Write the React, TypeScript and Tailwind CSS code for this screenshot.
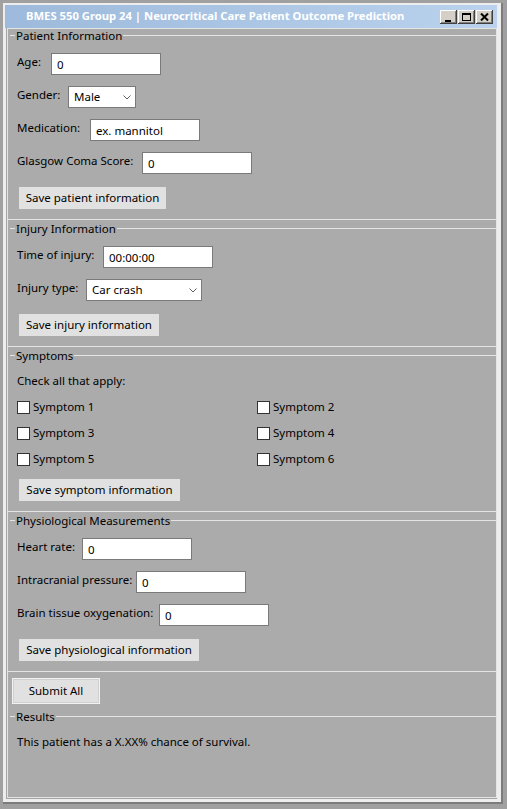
const Legend = ({ title }: { title: string }) => {
  return (
    <div className="flex h-[13px] items-center">
      <span className="ml-[2px] h-px w-[5px] bg-[#e4e4e4]" />
      <span className="px-[1px] leading-[13px]">{title}</span>
      <span className="h-px flex-1 bg-[#e4e4e4]" />
    </div>
  );
};

const Field = ({ label, labelW, value }: { label: string; labelW: string; value: string }) => {
  return (
    <div className="mt-[11px] flex h-[22px] items-start">
      <span className={`${labelW} pt-[1px] leading-4`}>{label}</span>
      <input
        defaultValue={value}
        className="h-[22px] w-[110px] border border-[#7a7a7a] bg-white pl-[5px] text-black outline-none"
      />
    </div>
  );
};

const Select = ({ label, labelW, value, boxW }: { label: string; labelW: string; value: string; boxW: string }) => {
  return (
    <div className="mt-[11px] flex h-[22px] items-start">
      <span className={`${labelW} pt-[1px] leading-4`}>{label}</span>
      <div className={`${boxW} flex h-[22px] items-center justify-between border border-[#7a7a7a] bg-white pl-[5px] pr-[4px]`}>
        <span>{value}</span>
        <svg width="8" height="5" viewBox="0 0 8 5">
          <path d="M0.5 0.5 L4 4 L7.5 0.5" stroke="#606060" strokeWidth="1" fill="none" />
        </svg>
      </div>
    </div>
  );
};

const SaveButton = ({ text, w, mt }: { text: string; w: string; mt: string }) => {
  return (
    <div className={`${mt} ml-[2px] flex h-[22px] ${w} items-center justify-center bg-[#e1e1e1]`}>{text}</div>
  );
};

const Symptom = ({ n }: { n: number }) => {
  return (
    <div className="flex h-4 items-center">
      <span className="h-[13px] w-[13px] border border-[#333333] bg-white" />
      <span className="ml-[3px]">Symptom {n}</span>
    </div>
  );
};

const App = () => {
  return (
    <div className="h-[809px] w-[507px] bg-[#a0a0a0] pl-[3px] pt-[3px] font-['Noto_Sans',sans-serif] text-[11.5px] text-black">
      {/* window frame */}
      <div className="h-[801px] w-[500px] border-b-2 border-r-2 border-[#7c7c7c] bg-[#ededed] pl-[2px] pt-[2px]">
        {/* title bar */}
        <div className="flex h-[23px] w-[492px] items-center bg-gradient-to-r from-[#9dbadc] to-[#bad2ed] pl-[21px] pr-[4px]">
          <span className="flex-1 whitespace-nowrap text-[11.25px] font-bold text-white">
            BMES 550 Group 24 | Neurocritical Care Patient Outcome Prediction
          </span>
          <div className="flex gap-[1px]">
            <div className="relative h-[14px] w-[17px] bg-[#d4d0c8] shadow-[inset_-1px_-1px_#404040,inset_1px_1px_#ffffff,inset_-2px_-2px_#808080]">
              <span className="absolute left-[5px] top-[10px] h-[2px] w-[6px] bg-black" />
            </div>
            <div className="relative h-[14px] w-[17px] bg-[#d4d0c8] shadow-[inset_-1px_-1px_#404040,inset_1px_1px_#ffffff,inset_-2px_-2px_#808080]">
              <span className="absolute left-[4px] top-[3px] h-[8px] w-[9px] border border-t-2 border-black" />
            </div>
            <div className="relative h-[14px] w-[17px] bg-[#d4d0c8] shadow-[inset_-1px_-1px_#404040,inset_1px_1px_#ffffff,inset_-2px_-2px_#808080]">
              <svg className="absolute left-[4px] top-[3px]" width="9" height="8" viewBox="0 0 9 8">
                <path d="M1 0.5 L8 7.5 M8 0.5 L1 7.5" stroke="black" strokeWidth="2" />
              </svg>
            </div>
          </div>
        </div>

        {/* body */}
        <div className="ml-[1px] h-[771px] w-[491px] border-b border-l border-[#a4a4a4]">
          <div className="flex h-full flex-col border-l border-r border-t border-[#e4e4e4] bg-[#ababab]">
            {/* Patient Information */}
            <div className="border-b border-[#e4e4e4] pb-[10px]">
              <Legend title="Patient Information" />
              <div className="pl-[9px]">
                <Field label="Age:" labelW="w-[34px]" value="0" />
                <Select label="Gender:" labelW="w-[51px]" value="Male" boxW="w-[68px]" />
                <Field label="Medication:" labelW="w-[73px]" value="ex. mannitol" />
                <Field label="Glasgow Coma Score:" labelW="w-[125px]" value="0" />
                <SaveButton text="Save patient information" w="w-[147px]" mt="mt-[13px]" />
              </div>
            </div>

            {/* Injury Information */}
            <div className="mt-[2px] border-b border-[#e4e4e4] pb-[10px]">
              <Legend title="Injury Information" />
              <div className="pl-[9px]">
                <Field label="Time of injury:" labelW="w-[86px]" value="00:00:00" />
                <Select label="Injury type:" labelW="w-[69px]" value="Car crash" boxW="w-[116px]" />
                <SaveButton text="Save injury information" w="w-[140px]" mt="mt-[13px]" />
              </div>
            </div>

            {/* Symptoms */}
            <div className="mt-[2px] border-b border-[#e4e4e4] pb-[10px]">
              <Legend title="Symptoms" />
              <div className="pl-[9px]">
                <div className="mt-[11px] leading-4">Check all that apply:</div>
                <div className="mt-[10px] grid grid-cols-[240px_1fr] gap-y-[10px]">
                  {[1, 2, 3, 4, 5, 6].map((n) => (
                    <Symptom key={n} n={n} />
                  ))}
                </div>
                <SaveButton text="Save symptom information" w="w-[161px]" mt="mt-[12px]" />
              </div>
            </div>

            {/* Physiological Measurements */}
            <div className="mt-[2px] border-b border-[#e4e4e4] pb-[10px]">
              <Legend title="Physiological Measurements" />
              <div className="pl-[9px]">
                <Field label="Heart rate:" labelW="w-[65px]" value="0" />
                <Field label="Intracranial pressure:" labelW="w-[119px]" value="0" />
                <Field label="Brain tissue oxygenation:" labelW="w-[142px]" value="0" />
                <SaveButton text="Save physiological information" w="w-[180px]" mt="mt-[13px]" />
              </div>
            </div>

            {/* Submit */}
            <div className="mb-[6px] ml-[4px] mt-[6px] flex h-[26px] w-[88px] items-center justify-center border border-[#f2f2f2] bg-[#e1e1e1] shadow-[inset_0_0_0_1px_#d0d0d0]">
              Submit All
            </div>

            {/* Results */}
            <div className="flex-1 border-b border-[#e4e4e4]">
              <Legend title="Results" />
              <div className="mt-[11px] pl-[9px] leading-4">This patient has a X.XX% chance of survival.</div>
            </div>
          </div>
        </div>
      </div>
    </div>
  );
};

export default App;
